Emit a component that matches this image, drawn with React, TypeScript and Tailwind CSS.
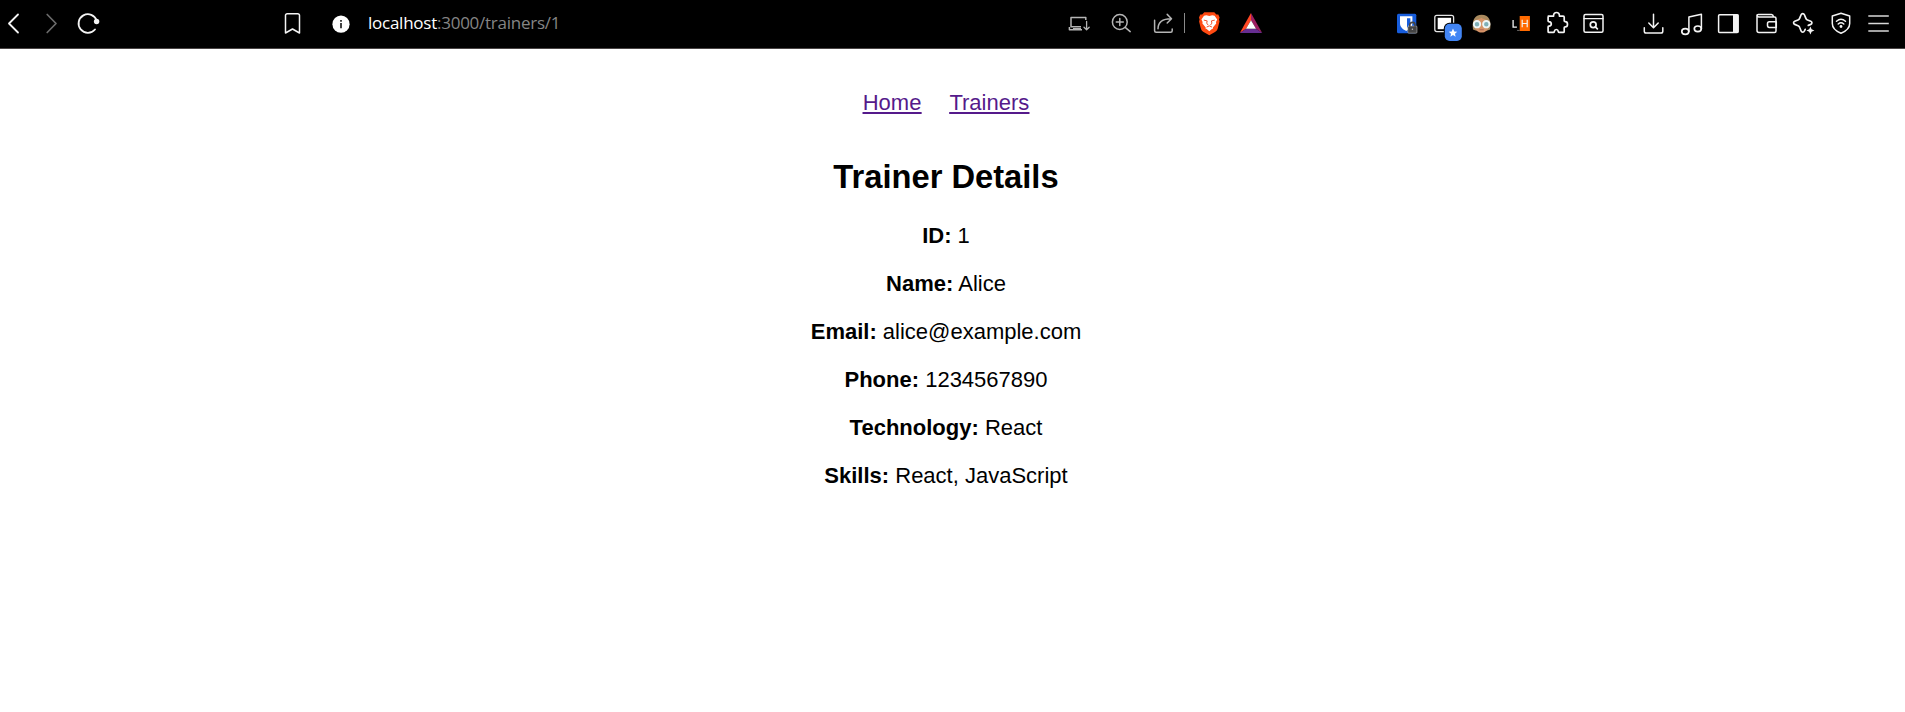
import type { ReactNode } from "react";

type IconProps = { x: number; w: number; children: ReactNode; className?: string };

/* Toolbar glyphs share one coordinate space: x runs along the bar, y is 0-48. */
function Icon({ x, w, children, className = "" }: IconProps) {
  return (
    <svg
      width={w}
      height={48}
      viewBox={`${x} 0 ${w} 48`}
      fill="none"
      stroke="currentColor"
      strokeWidth={1.5}
      strokeLinecap="round"
      strokeLinejoin="round"
      className={`shrink-0 ${className}`}
    >
      {children}
    </svg>
  );
}

function NavigationIcons() {
  return (
    <div className="flex gap-4 pl-1">
      <Icon x={4} w={20}>
        <path d="M18 14.5 9 23.5l9 9" strokeWidth={1.8} />
      </Icon>
      <Icon x={40} w={20} className="text-[#6b6b6b]">
        <path d="M47.2 14.5 56 23.5l-8.8 9" strokeWidth={1.7} />
      </Icon>
      <Icon x={76} w={24}>
        <path d="M96.7 20.5A9.3 9.3 0 1 0 95 29.5" strokeWidth={1.8} />
        <circle cx="96.6" cy="21.5" r="2.7" fill="currentColor" stroke="none" />
      </Icon>
    </div>
  );
}

function PageActions() {
  return (
    <div className="flex">
      <Icon x={1064} w={40} className="text-[#b5b5b5]">
        <path d="M1085.8 20v-2.6H1071v9.3h10M1069.4 27v2.8H1082M1073 28.8h8" strokeLinecap="butt" />
        <path d="M1086.6 21.5v8.2m-2.6-2.5 2.6 2.6 2.6-2.6" strokeWidth={1.3} />
      </Icon>
      <Icon x={1104} w={40} className="text-[#b5b5b5]">
        <circle cx="1119.8" cy="22" r="7.4" />
        <path d="m1125.2 27.4 5 4.2M1116.3 22h7M1119.8 18.5v7" />
      </Icon>
      <Icon x={1144} w={36} className="text-[#b5b5b5]">
        <path d="M1154.6 20.2v10.500a1.500 1.500 0 0 0 1.500 1.500h14.600a1.500 1.500 0 0 0 1.500-1.500v-1.700" />
        <path d="M1158 28.8c0-6.3 4.2-10.1 13.2-10.1m-4-4.3 4.3 4.3-4.3 4.3" />
      </Icon>
      <Icon x={1180} w={10} className="text-[#8a8a8a]">
        <path d="M1184.5 13v20" strokeWidth={1} strokeLinecap="butt" />
      </Icon>
      <Icon x={1190} w={40}>
        <path
          d="m1204.3 12.2-2.1 2.2-1.9.2-1.3 3 .6 1.8-.5 2 1.7 6.8c.5 1.8 1.3 2.8 2.8 3.8l5.7 3.2 5.7-3.2c1.5-1 2.3-2 2.8-3.8l1.7-6.8-.5-2 .6-1.8-1.3-3-1.9-.2-2.1-2.2z"
          fill="#ff4a12"
          stroke="none"
        />
        <path
          d="m1209.3 16-3-.7-2.3.4-2.6 3.8 1.2 2.4-.2 1.5 3.3 4-.2 1.2 1.2.5 2.6 2.1 2.6-2.1 1.2-.5-.2-1.2 3.3-4-.2-1.5 1.2-2.4-2.6-3.8-2.3-.4z"
          fill="#fff"
          stroke="none"
        />
        <path d="m1204.2 20.2 3 .7-.5 2.2 1.2 1.7M1214.4 20.2l-3 .7.5 2.2-1.2 1.7M1207 26.9l2.3-1 2.3 1" stroke="#f0441a" strokeWidth={0.9} />
      </Icon>
      <Icon x={1230} w={40}>
        <g stroke="none">
          <path d="M1251 13 1239.8 33l6.2-4.2 5-8.6z" fill="#ff4724" />
          <path d="m1251 13 11.2 20-6.2-4.2-5-8.6z" fill="#9e1f63" />
          <path d="M1239.8 33h22.4l-6.2-4.2h-10z" fill="#662d91" />
          <path d="m1251 20.2 5 8.6h-10z" fill="#fff" />
        </g>
      </Icon>
    </div>
  );
}

function ExtensionIcons() {
  return (
    <div className="flex">
      <Icon x={1390} w={36}>
        <g stroke="none">
          <rect x="1397" y="13.7" width="19.3" height="19.5" rx="1.5" fill="#175ddc" />
          <path d="M1400 16.300h12.400v7.200c0 3.600-3.200 6-6.200 7.400-3-1.400-6.200-3.800-6.200-7.400z" fill="#fff" />
          <path d="M1407 18.200h3.400v5.200c0 2-1.400 3.400-3.400 4.400z" fill="#175ddc" />
          <rect x="1407.800" y="26" width="9.200" height="7.200" rx="1" fill="#444" stroke="#c8c8c8" strokeWidth="0.5" />
        </g>
        <path d="M1409.800 26v-1a2.600 2.600 0 0 1 5.200 0v1" stroke="#444" strokeWidth={1.600} />
        <circle cx="1412.400" cy="29.300" r="0.800" fill="#bbb" stroke="none" />
      </Icon>
      <Icon x={1426} w={40}>
        <rect x="1434.800" y="15.400" width="18.800" height="16.200" rx="2" stroke="#e5e5e5" strokeWidth={1.300} />
        <rect x="1437.700" y="17.800" width="13.400" height="11.400" fill="#fff" stroke="none" />
        <rect x="1443.800" y="22.800" width="18.800" height="18.800" rx="5.500" fill="#000" stroke="none" />
        <rect x="1444.800" y="23.800" width="17" height="17.200" rx="4.800" fill="#4285f4" stroke="none" />
        <path d="m1453 28.600 1.250 2.800 3 .3-2.300 2 .7 3-2.650-1.600-2.650 1.600.7-3-2.300-2 3-.3z" fill="#fff" stroke="none" />
      </Icon>
      <Icon x={1466} w={36}>
        <path d="M1473 29.500c-1.300-9 1.600-14.700 8.700-14.700s9.800 5.700 8.400 14.700l-2.600 1h-12z" fill="#a98a5e" stroke="none" />
        <path d="M1475 22c0-3 4.800-2.600 6.500-4.300 2 2 6.800 1.300 6.800 5.300v4c0 3-3 5.600-6.600 5.600s-6.700-2.600-6.700-5.600z" fill="#d69468" stroke="none" />
        <circle cx="1477" cy="24.200" r="3.200" fill="#7fb0b8" stroke="#eef6f7" strokeWidth={1.900} />
        <circle cx="1486.300" cy="24.200" r="3.200" fill="#7fb0b8" stroke="#eef6f7" strokeWidth={1.900} />
        <path d="M1480 29.800h3.400" stroke="#b26655" strokeWidth={1} />
      </Icon>
      <Icon x={1502} w={38}>
        <rect x="1519.700" y="16" width="10.200" height="15" fill="#ff6a00" stroke="none" />
        <path d="M1513.100 20v7.100h3.800" strokeWidth={1.300} strokeLinecap="butt" strokeLinejoin="miter" />
        <path d="M1522.200 19.800v7.400M1527.200 19.800v7.400M1522.200 23.500h5" strokeWidth={1.200} strokeLinecap="butt" />
        <path d="M1517.500 30.400h1.800" stroke="#777" strokeWidth={0.900} />
      </Icon>
      <Icon x={1540} w={36}>
        <path d="M1548.300 16.200h4.700c.6 0 .8-.4.7-1-.2-1.500 1-2.700 2.800-2.700s3 1.200 2.800 2.700c-.1.600.1 1 .7 1h3.200a1 1 0 0 1 1 1v3.600c0 .6.4.8 1 .8 1.200 0 2.300 1.100 2.300 2.600s-1.100 2.700-2.300 2.700c-.6 0-1 .2-1 .8v3.700a1 1 0 0 1-1 1h-4c-.6 0-.8-.3-.9-.9-.2-1.300-1-2-2-2s-1.800.7-2 2c-.1.600-.3.900-.9.900h-4.300a1 1 0 0 1-1-1v-4.300c0-.5.3-.8.8-.9 1.500-.2 2.400-1 2.400-2.200s-.9-2.100-2.400-2.300c-.5-.1-.8-.4-.8-.9v-3.600a1 1 0 0 1 1-1z" strokeWidth={1.700} />
      </Icon>
      <Icon x={1576} w={36}>
        <rect x="1584" y="14.500" width="19" height="17.700" rx="1.500" />
        <path d="M1584 18.600h19" strokeWidth={1.300} />
        <circle cx="1593.200" cy="24.700" r="2.900" strokeWidth={1.700} />
        <path d="m1595.300 26.800 2.100 2.100" strokeWidth={1.700} />
      </Icon>
    </div>
  );
}

function BrowserIcons() {
  return (
    <div className="flex">
      <Icon x={1636} w={36}>
        <path d="M1653.500 14.300v13.200m-4.700-4.500 4.700 4.700 4.700-4.700M1644.300 27.800v3.400a1.800 1.800 0 0 0 1.800 1.800h14.900a1.800 1.800 0 0 0 1.800-1.800v-3.400" />
      </Icon>
      <Icon x={1672} w={38}>
        <ellipse cx="1685.300" cy="31.500" rx="3.500" ry="2.800" strokeWidth={1.700} />
        <ellipse cx="1697.800" cy="28.800" rx="3.500" ry="2.800" strokeWidth={1.700} />
        <path d="M1688.900 31.500V17l12.500-2.800v14.600" />
      </Icon>
      <Icon x={1710} w={37}>
        <rect x="1718.600" y="14.700" width="19.500" height="17.800" rx="1" />
        <path d="M1733 14.500h5.500v18h-5.500z" fill="currentColor" stroke="none" />
      </Icon>
      <Icon x={1747} w={38}>
        <path d="M1776 18.800v-.2a1.500 1.500 0 0 0-1.500-1.500h-15.500a2 2 0 0 1-2-2v15.500a2 2 0 0 0 2 2h15.500a1.500 1.500 0 0 0 1.500-1.500v-12.300M1757 15.700c0-.8.5-1.300 1.300-1.300h13.200c1 0 1.700.7 2 2.200" />
        <path d="M1776.300 21.800h-7a1.800 1.800 0 0 0-1.800 1.800v2a1.800 1.800 0 0 0 1.800 1.800h7z" />
      </Icon>
      <Icon x={1785} w={38}>
        <path
          d="M1805.200 29.300l-.8 1.700c-.7 1.500-2.700 1.500-3.300 0l-1.500-3.700c-.3-.8-.8-1.300-1.600-1.600l-3.300-1.300c-1.500-.6-1.500-2.500 0-3.100l3.300-1.300c.8-.3 1.300-.8 1.600-1.600l1.500-3.700c.6-1.500 2.700-1.500 3.300 0l1.500 3.700c.3.800.8 1.300 1.600 1.600l3.300 1.300c1.500.6 1.500 2.500 0 3.100l-2.500 1"
          strokeWidth={1.700}
        />
        <path d="M1810.400 26.500l1.200 2.800 2.800 1.200-2.800 1.200-1.200 2.800-1.200-2.800-2.800-1.200 2.800-1.200z" fill="currentColor" stroke="none" />
      </Icon>
      <Icon x={1823} w={36}>
        <path d="M1841 13.300 1832.300 16v7.500c0 4.300 3.800 7.700 8.700 9.800 4.900-2.100 8.700-5.500 8.700-9.800V16z" />
        <path d="M1836.500 21.200c2.700-2.300 6.300-2.300 9 0M1838.200 24c1.700-1.500 3.900-1.500 5.600 0" strokeWidth={1.500} />
        <circle cx="1841" cy="26.500" r="1.400" fill="currentColor" stroke="none" />
      </Icon>
      <Icon x={1859} w={36} className="text-[#d8d8d8]">
        <path d="M1868.300 16h20.500M1868.300 23.500h20.500M1868.300 31h20.500" strokeLinecap="butt" strokeWidth={1.500} />
      </Icon>
    </div>
  );
}

function Toolbar() {
  return (
    <header className="flex h-[49px] border-b border-[#4a4545] bg-black text-[#f4f4f4]">
      <div className="flex w-[280px] shrink-0">
        <NavigationIcons />
      </div>
      <Icon x={280} w={48}>
        <path d="M287.200 13.800h10.600a1.700 1.700 0 0 1 1.700 1.700V33l-7-4-7 4V15.500a1.700 1.700 0 0 1 1.700-1.700z" />
      </Icon>
      <Icon x={328} w={40}>
        <circle cx="341" cy="24.200" r="8.600" fill="#fff" stroke="none" />
        <path d="M341 23v5.200M341 20v1.800" stroke="#222" strokeWidth={1.700} strokeLinecap="butt" />
      </Icon>
      <div className="w-[696px] shrink-0 whitespace-nowrap font-['Open_Sans',sans-serif] text-[17px] leading-[46px] tracking-[-0.25px] text-[#858585]">
        <span className="text-white">localhost</span>:3000/trainers/1
      </div>
      <PageActions />
      <div className="w-[120px] shrink-0" />
      <ExtensionIcons />
      <div className="w-6 shrink-0" />
      <BrowserIcons />
    </header>
  );
}

const details = [
  ["ID", "1"],
  ["Name", "Alice"],
  ["Email", "alice@example.com"],
  ["Phone", "1234567890"],
  ["Technology", "React"],
  ["Skills", "React, JavaScript"],
];

export default function App() {
  return (
    <div className="h-[712px] overflow-hidden bg-white font-['Liberation_Sans',Arial,sans-serif] text-black">
      <Toolbar />
      <main className="flex flex-col items-center pt-[41px] pr-[13px] text-[22px] leading-[26px]">
        <nav className="flex gap-7 text-[#551a8b] underline decoration-2 underline-offset-2">
          <a href="#home">Home</a>
          <a href="#trainers">Trainers</a>
        </nav>
        <h2 className="mt-[42px] text-[32.700px] font-bold leading-[38px]">Trainer Details</h2>
        <div className="mt-[27px] flex flex-col items-center gap-[22px]">
          {details.map(([label, value]) => (
            <p key={label}>
              <strong>{label}:</strong> {value}
            </p>
          ))}
        </div>
      </main>
    </div>
  );
}
